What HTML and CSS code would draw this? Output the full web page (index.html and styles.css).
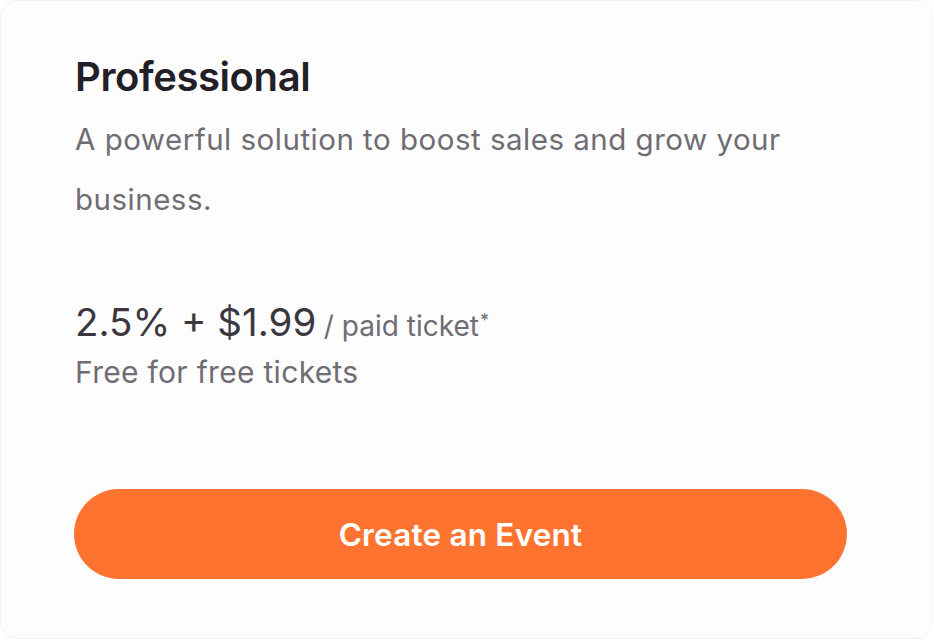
FILE: index.html
```html
<!DOCTYPE html>
<html lang="en">
<head>
<meta charset="utf-8">
<link rel="stylesheet" href="styles.css">
</head>
<body>
<div class="card">
  <h2 class="title">Professional</h2>
  <p class="desc">A powerful solution to boost sales and grow your business.</p>
  <div class="price">
    <div class="fee"><span class="amount">2.5% + $1.99</span> <span class="unit">/ paid ticket<span class="star">*</span></span></div>
    <div class="free">Free for free tickets</div>
  </div>
  <button class="cta">Create an Event</button>
</div>
</body>
</html>
```
FILE: styles.css
```css
* { box-sizing: border-box; }
html, body { margin: 0; padding: 0; background: #ffffff; }
body { width: 934px; height: 640px; overflow: hidden; font-family: Inter, "Noto Sans", sans-serif; }
.card {
  width: 933px;
  height: 639px;
  border: 1px solid #f3f2f4;
  border-radius: 18px;
  background: #fefdfe;
  padding: 52px 60px 0 74px;
  display: flex;
  flex-direction: column;
}
.title {
  margin: 0;
  font-size: 40px;
  font-weight: 600;
  line-height: 48px;
  color: #222026;
  letter-spacing: -0.4px;
}
.desc {
  margin: 8px 0 0;
  font-size: 29.5px;
  line-height: 60px;
  color: #6f6c74;
  letter-spacing: 0.5px;
  width: 760px;
}
.price { margin-top: 70px; }
.fee { line-height: 44px; white-space: nowrap; }
.amount { font-size: 38.5px; color: #3a383e; }
.unit { font-size: 28px; color: #6f6c74; margin-left: 3px; }
.star { font-size: 18px; vertical-align: 9px; margin-left: 1px; }
.free { font-size: 30px; color: #6f6c74; line-height: 40px; letter-spacing: 0.3px; }
.cta {
  margin-top: 97px;
  margin-left: -1px;
  width: 773px;
  height: 90px;
  border: none;
  border-radius: 45px;
  background: #ff7330;
  color: #fff;
  font-family: Inter, "Noto Sans", sans-serif;
  font-size: 31.5px;
  font-weight: 600;
  letter-spacing: 0.2px;
  flex: none;
}
```
